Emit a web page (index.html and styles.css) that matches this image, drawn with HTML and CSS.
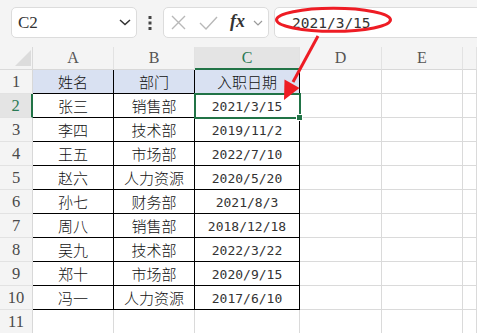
FILE: index.html
```html
<!DOCTYPE html>
<html>
<head>
<meta charset="utf-8">
<link rel="stylesheet" href="styles.css">
</head>
<body>
<div class="app">
  <div class="toolbar">
    <div class="namebox">
      <span class="ref">C2</span>
      <svg class="chev" width="12" height="7" viewBox="0 0 12 7"><path d="M1 1 L6 5.5 L11 1" fill="none" stroke="#333" stroke-width="1.5"/></svg>
    </div>
    <div class="more">
      <svg width="4" height="14" viewBox="0 0 4 14"><rect x="0.5" y="0" width="3" height="3" fill="#444"/><rect x="0.5" y="5.5" width="3" height="3" fill="#444"/><rect x="0.5" y="11" width="3" height="3" fill="#444"/></svg>
    </div>
    <div class="fxbox">
      <svg class="ico-x" width="15" height="15" viewBox="0 0 15 15"><path d="M1 1 L14 14 M14 1 L1 14" stroke="#b8b8b8" stroke-width="1.4" fill="none"/></svg>
      <svg class="ico-ok" width="19" height="14" viewBox="0 0 19 14"><path d="M1 7 L7 13 L18 1" stroke="#b8b8b8" stroke-width="1.4" fill="none"/></svg>
      <span class="fx">fx</span>
      <svg class="chev2" width="10" height="6" viewBox="0 0 10 6"><path d="M1 1 L5 5 L9 1" fill="none" stroke="#9a9a9a" stroke-width="1.2"/></svg>
    </div>
    <div class="formula"><span class="ftext">2021/3/15</span></div>
  </div>

  <div class="sheet">
    <div class="corner"><span class="tri"></span></div>
    <div class="ch">A</div><div class="ch">B</div><div class="ch ch-sel">C</div><div class="ch">D</div><div class="ch">E</div><div class="ch"></div>

    <div class="rh">1</div><div class="c t hd">姓名</div><div class="c t hd">部门</div><div class="c t hd">入职日期</div><div class="c"></div><div class="c"></div><div class="c"></div>
    <div class="rh rh-sel">2</div><div class="c t">张三</div><div class="c t">销售部</div><div class="c t num sel">2021/3/15</div><div class="c"></div><div class="c"></div><div class="c"></div>
    <div class="rh">3</div><div class="c t">李四</div><div class="c t">技术部</div><div class="c t num">2019/11/2</div><div class="c"></div><div class="c"></div><div class="c"></div>
    <div class="rh">4</div><div class="c t">王五</div><div class="c t">市场部</div><div class="c t num">2022/7/10</div><div class="c"></div><div class="c"></div><div class="c"></div>
    <div class="rh">5</div><div class="c t">赵六</div><div class="c t">人力资源</div><div class="c t num">2020/5/20</div><div class="c"></div><div class="c"></div><div class="c"></div>
    <div class="rh">6</div><div class="c t">孙七</div><div class="c t">财务部</div><div class="c t num">2021/8/3</div><div class="c"></div><div class="c"></div><div class="c"></div>
    <div class="rh">7</div><div class="c t">周八</div><div class="c t">销售部</div><div class="c t num">2018/12/18</div><div class="c"></div><div class="c"></div><div class="c"></div>
    <div class="rh">8</div><div class="c t">吴九</div><div class="c t">技术部</div><div class="c t num">2022/3/22</div><div class="c"></div><div class="c"></div><div class="c"></div>
    <div class="rh">9</div><div class="c t">郑十</div><div class="c t">市场部</div><div class="c t num">2020/9/15</div><div class="c"></div><div class="c"></div><div class="c"></div>
    <div class="rh">10</div><div class="c t">冯一</div><div class="c t">人力资源</div><div class="c t num">2017/6/10</div><div class="c"></div><div class="c"></div><div class="c"></div>
    <div class="rh">11</div><div class="c"></div><div class="c"></div><div class="c"></div><div class="c"></div><div class="c"></div><div class="c"></div>
  </div>

  <svg class="annot" width="477" height="333" viewBox="0 0 477 333">
    <ellipse cx="333.5" cy="19.8" rx="57" ry="11.5" fill="none" stroke="#ee1c24" stroke-width="3"/>
    <line x1="318" y1="36" x2="293" y2="82" stroke="#ee1c24" stroke-width="3"/>
    <polygon points="284,100 284.5,79.5 299.5,88" fill="#ee1c24"/>
  </svg>
</div>
</body>
</html>
```

FILE: styles.css
```css
html, body {
  margin: 0;
  padding: 0;
  background: #f4f4f4;
}
.app {
  position: relative;
  width: 477px;
  height: 333px;
  overflow: hidden;
  background: #f4f4f4;
  font-family: "Noto Sans CJK SC", "Noto Sans", sans-serif;
}
.toolbar {
  height: 47px;
  box-sizing: border-box;
  padding: 7px 0 9px 11px;
  display: flex;
  align-items: stretch;
}
.namebox {
  width: 126px;
  box-sizing: border-box;
  background: #fff;
  border: 1px solid #dcdcdc;
  border-radius: 5px;
  display: flex;
  align-items: center;
  justify-content: space-between;
  padding: 0 5px 0 6px;
}
.ref {
  font-family: "Liberation Serif", serif;
  font-size: 17px;
  color: #333;
  margin-top: 1px;
}
.more {
  width: 26px;
  display: flex;
  align-items: center;
  justify-content: center;
}
.fxbox {
  width: 106px;
  box-sizing: border-box;
  background: #fff;
  border: 1px solid #dcdcdc;
  border-radius: 5px;
  display: flex;
  align-items: center;
  padding: 0 0 0 7px;
}
.ico-x { margin-right: 13px; }
.ico-ok { margin-right: 12px; }
.fx {
  font-family: "Liberation Serif", serif;
  font-style: italic;
  font-weight: bold;
  font-size: 18px;
  color: #333;
  margin-right: 8px;
  margin-top: -2px;
}
.formula {
  flex: 1;
  margin-left: 5px;
  margin-right: -10px;
  background: #fff;
  border: 1px solid #dcdcdc;
  border-radius: 5px;
  display: flex;
  align-items: center;
  padding-left: 17px;
}
.ftext {
  font-family: "DejaVu Sans Mono", monospace;
  font-size: 14.5px;
  color: #333;
  margin-top: 1px;
}

.sheet {
  display: grid;
  grid-template-columns: 33px 81px 81px 105px 82px 81px 1fr;
  grid-template-rows: 23px repeat(11, 24px);
  background: #fff;
}
.sheet > div {
  box-sizing: border-box;
  border-right: 1px solid #dadada;
  border-bottom: 1px solid #dadada;
  display: flex;
  align-items: center;
  justify-content: center;
  white-space: nowrap;
  overflow: visible;
}
.corner {
  background: #f4f4f4;
  position: relative;
}
.tri {
  position: absolute;
  right: 1px;
  bottom: 3px;
  width: 0;
  height: 0;
  border-left: 16px solid transparent;
  border-bottom: 16px solid #dcdcdc;
}
.sheet > .ch {
  background: #f4f4f4;
  font-family: "Liberation Serif", serif;
  font-size: 16px;
  color: #555;
  border-right-color: #e2e2e2;
  border-bottom-color: #d8d8d8;
}
.sheet > .ch-sel {
  background: #e4e4e4;
  color: #2a7a55;
  border-bottom: 2px solid #217346;
}
.sheet > .rh {
  background: #f4f4f4;
  font-family: "Liberation Serif", serif;
  font-size: 16.5px;
  color: #4a4a4a;
  border-bottom-color: #e2e2e2;
  border-right-color: #d8d8d8;
}
.sheet > .rh-sel {
  background: #e4e4e4;
  color: #2a7a55;
  border-right: 2px solid #217346;
}
.c {
  font-size: 15px;
  font-weight: 300;
  color: #111;
  background: #fff;
}
.sheet > .t {
  border-right-color: #000;
  border-bottom-color: #000;
}
.sheet > .hd {
  background: #d9e1f2;
}
.num {
  font-family: "DejaVu Sans Mono", monospace;
  font-size: 13px;
  color: #333;
  padding-top: 1px;
}
.sel {
  position: relative;
}
.sel::after {
  content: "";
  position: absolute;
  left: -1px;
  top: -1px;
  right: -2px;
  bottom: -2px;
  border: 2px solid #217346;
}
.sel::before {
  content: "";
  position: absolute;
  right: -4px;
  bottom: -4px;
  width: 5px;
  height: 5px;
  background: #217346;
  border: 1px solid #fff;
  z-index: 2;
}
.annot {
  position: absolute;
  left: 0;
  top: 0;
  pointer-events: none;
}
```
